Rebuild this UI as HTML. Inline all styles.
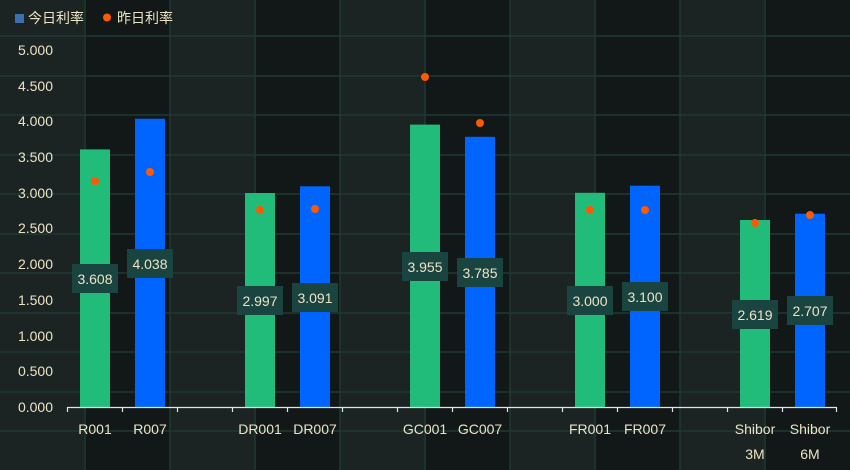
<!DOCTYPE html><html><head><meta charset="utf-8"><style>body{margin:0;background:#121817}svg{display:block}text{font-family:"Liberation Sans","Noto Sans CJK SC",sans-serif;fill:#ede3c6}</style></head><body>
<svg width="850" height="470" xmlns="http://www.w3.org/2000/svg">
<g fill="#1b2422"><rect x="0" y="0" width="85" height="470"/><rect x="170" y="0" width="85" height="470"/><rect x="340" y="0" width="85" height="470"/><rect x="510" y="0" width="85" height="470"/><rect x="680" y="0" width="85" height="470"/></g>
<g stroke="#1e3a33" stroke-width="1.5">
<line x1="85" y1="0" x2="85" y2="470"/><line x1="170" y1="0" x2="170" y2="470"/><line x1="255" y1="0" x2="255" y2="470"/><line x1="340" y1="0" x2="340" y2="470"/><line x1="425" y1="0" x2="425" y2="470"/><line x1="510" y1="0" x2="510" y2="470"/><line x1="595" y1="0" x2="595" y2="470"/><line x1="680" y1="0" x2="680" y2="470"/><line x1="765" y1="0" x2="765" y2="470"/>
<line x1="0" y1="36" x2="850" y2="36"/><line x1="0" y1="76" x2="850" y2="76"/><line x1="0" y1="115" x2="850" y2="115"/><line x1="0" y1="155" x2="850" y2="155"/><line x1="0" y1="194" x2="850" y2="194"/><line x1="0" y1="234" x2="850" y2="234"/><line x1="0" y1="273" x2="850" y2="273"/><line x1="0" y1="313" x2="850" y2="313"/><line x1="0" y1="352" x2="850" y2="352"/><line x1="0" y1="392" x2="850" y2="392"/><line x1="0" y1="431" x2="850" y2="431"/>
</g>
<rect x="15" y="14" width="9" height="9" fill="#3d6fb0"/><text x="28" y="23" font-size="14">今日利率</text>
<circle cx="107" cy="17.5" r="4" fill="#ff5a00"/><text x="117" y="23" font-size="14">昨日利率</text>
<g font-size="14" text-anchor="end">
<text x="53" y="412">0.000</text><text x="53" y="376">0.500</text><text x="53" y="341">1.000</text><text x="53" y="305">1.500</text><text x="53" y="269">2.000</text><text x="53" y="233">2.500</text><text x="53" y="198">3.000</text><text x="53" y="162">3.500</text><text x="53" y="126">4.000</text><text x="53" y="91">4.500</text><text x="53" y="55">5.000</text>
</g>
<g fill="#21bb7a"><rect x="80" y="149.4" width="30" height="257.6"/><rect x="245" y="193" width="30" height="214"/><rect x="410" y="124.6" width="30" height="282.4"/><rect x="575" y="192.8" width="30" height="214.2"/><rect x="740" y="220" width="30" height="187"/></g>
<g fill="#0064fe"><rect x="135" y="118.7" width="30" height="288.3"/><rect x="300" y="186.3" width="30" height="220.7"/><rect x="465" y="136.8" width="30" height="270.2"/><rect x="630" y="185.7" width="30" height="221.3"/><rect x="795" y="213.7" width="30" height="193.3"/></g>
<g fill="#1a4440">
<rect x="72" y="264" width="46" height="29"/><rect x="127" y="249" width="46" height="29"/><rect x="237" y="286" width="46" height="29"/><rect x="292" y="283" width="46" height="29"/><rect x="402" y="252" width="46" height="29"/><rect x="457" y="258" width="46" height="29"/><rect x="567" y="286" width="46" height="29"/><rect x="622" y="282" width="46" height="29"/><rect x="732" y="300" width="46" height="29"/><rect x="787" y="296" width="46" height="29"/>
</g>
<g font-size="14" text-anchor="middle">
<text x="95" y="284">3.608</text><text x="150" y="269">4.038</text><text x="260" y="306">2.997</text><text x="315" y="303">3.091</text><text x="425" y="272">3.955</text><text x="480" y="278">3.785</text><text x="590" y="306">3.000</text><text x="645" y="302">3.100</text><text x="755" y="320">2.619</text><text x="810" y="316">2.707</text>
</g>
<g fill="#ff5a00"><circle cx="95" cy="181" r="4"/><circle cx="150" cy="172" r="4"/><circle cx="260" cy="210" r="4"/><circle cx="315" cy="209" r="4"/><circle cx="425" cy="77" r="4"/><circle cx="480" cy="123" r="4"/><circle cx="590" cy="210" r="4"/><circle cx="645" cy="210" r="4"/><circle cx="755" cy="223" r="4"/><circle cx="810" cy="215" r="4"/></g>
<g stroke="#dfe6ea" stroke-width="1.2"><line x1="67" y1="407.5" x2="837" y2="407.5"/>
<line x1="67.5" y1="407" x2="67.5" y2="412"/><line x1="122.5" y1="407" x2="122.5" y2="412"/><line x1="177.5" y1="407" x2="177.5" y2="412"/><line x1="232.5" y1="407" x2="232.5" y2="412"/><line x1="287.5" y1="407" x2="287.5" y2="412"/><line x1="342.5" y1="407" x2="342.5" y2="412"/><line x1="397.5" y1="407" x2="397.5" y2="412"/><line x1="452.5" y1="407" x2="452.5" y2="412"/><line x1="507.5" y1="407" x2="507.5" y2="412"/><line x1="562.5" y1="407" x2="562.5" y2="412"/><line x1="617.5" y1="407" x2="617.5" y2="412"/><line x1="672.5" y1="407" x2="672.5" y2="412"/><line x1="727.5" y1="407" x2="727.5" y2="412"/><line x1="782.5" y1="407" x2="782.5" y2="412"/><line x1="836.5" y1="407" x2="836.5" y2="412"/></g>
<g font-size="14" text-anchor="middle">
<text x="95" y="434">R001</text><text x="150" y="434">R007</text><text x="260" y="434">DR001</text><text x="315" y="434">DR007</text><text x="425" y="434">GC001</text><text x="480" y="434">GC007</text><text x="590" y="434">FR001</text><text x="645" y="434">FR007</text><text x="755" y="434">Shibor</text><text x="810" y="434">Shibor</text><text x="755" y="459">3M</text><text x="810" y="459">6M</text>
</g>
</svg></body></html>
